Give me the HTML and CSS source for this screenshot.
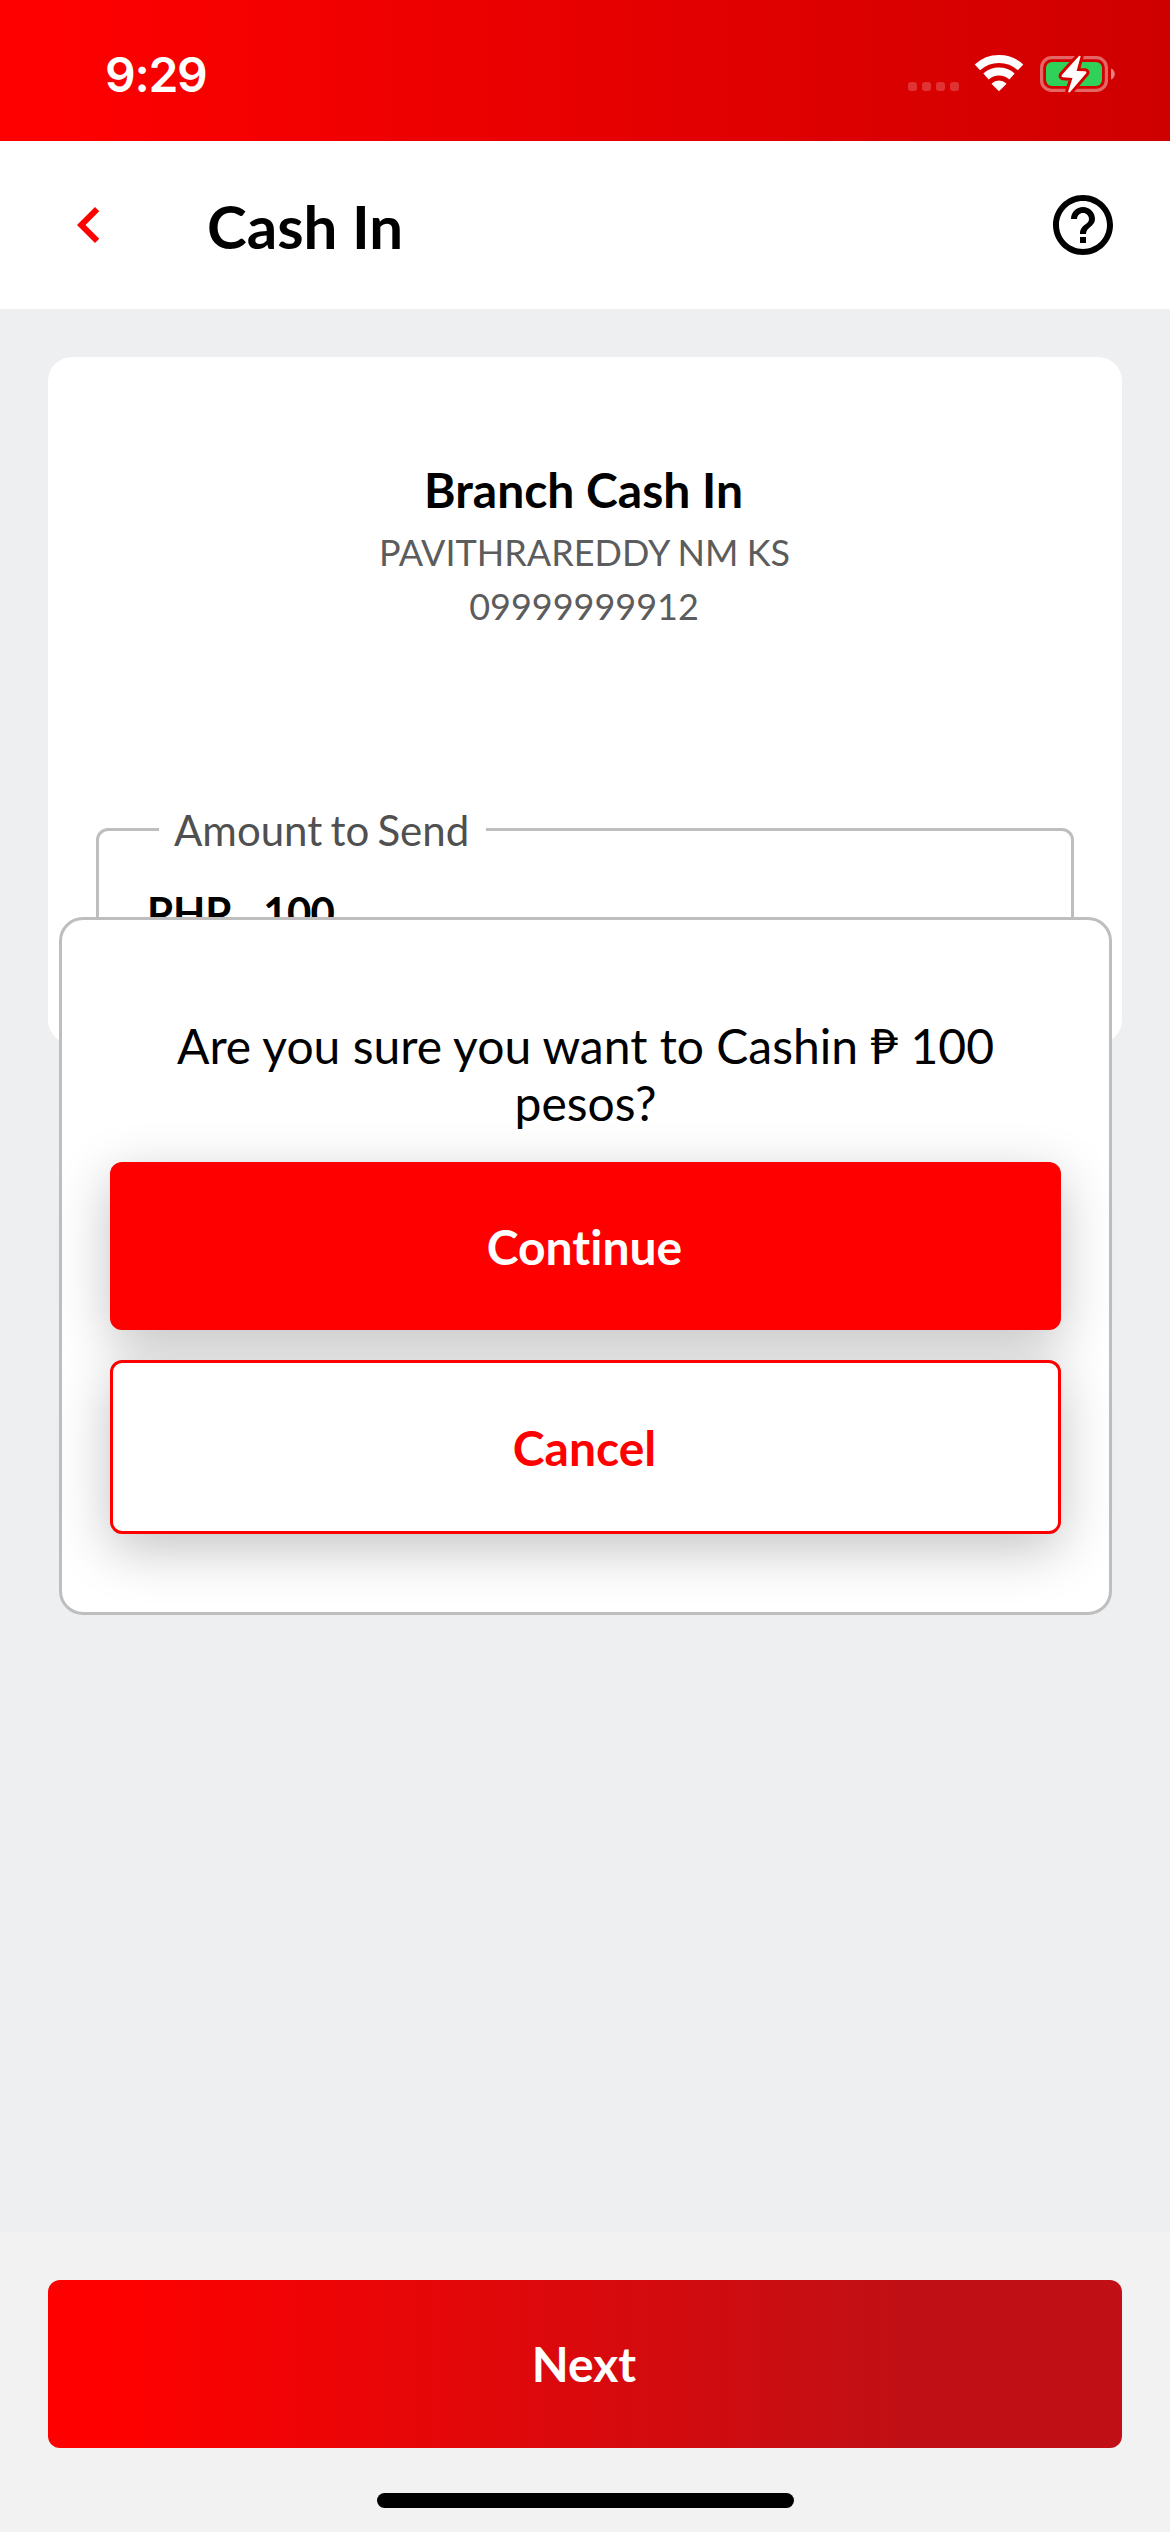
FILE: index.html
```html
<!DOCTYPE html>
<html lang="en">
<head>
<meta charset="utf-8">
<title>Cash In</title>
<link rel="stylesheet" href="styles.css">
</head>
<body>
<div class="screen">
  <div class="status-bar">
    <span class="time">9:29</span>
    <div class="indicators">
      <div class="signal"><i></i><i></i><i></i><i></i></div>
      <svg class="wifi" viewBox="-25 -37 50 38" aria-hidden="true">
        <path d="M-21.6-23.6A32 32 0 0 1 21.6-23.6M-13-14.5A19.5 19.5 0 0 1 13-14.5" fill="none" stroke="#fff" stroke-width="8"/>
        <path d="M-6.6-7.2A10 10 0 0 1 6.6-7.2L0-.8Z" fill="#fff" stroke="#fff" stroke-width="1.4" stroke-linejoin="round"/>
      </svg>
      <svg class="battery" viewBox="0 0 76 40" aria-hidden="true">
        <rect x="1.6" y="3.6" width="64.8" height="32.800" rx="10" fill="none" stroke="#fff" stroke-opacity=".4" stroke-width="3.200"/>
        <path d="M71 14.5c5 1.500 5 9.500 0 11Z" fill="#fff" fill-opacity=".5"/>
        <rect x="6" y="8" width="56" height="24" rx="6" fill="#30d158"/>
        <path d="M38.500 2.500 22 20.700Q20.800 22.900 23 23.300L32.500 24 28.200 37.500Q28.600 39.300 30.300 37.700L46 19.500Q47.300 17.500 45 17.300L36.600 17 40.600 2.500Q40 .900 38.500 2.500Z" fill="#fff" stroke="#d60000" stroke-width="6" stroke-linejoin="round" paint-order="stroke"/>
      </svg>
    </div>
  </div>

  <header class="header">
    <svg class="back" viewBox="0 0 24 24" aria-label="Back"><path fill="#f00" d="M15.410 7.410 14 6l-6 6 6 6 1.410-1.410L10.830 12z"/></svg>
    <h1 class="title">Cash In</h1>
    <svg class="help" viewBox="0 0 24 24" aria-label="Help"><path d="M11 18h2v-2h-2v2zm1-16C6.480 2 2 6.480 2 12s4.480 10 10 10 10-4.480 10-10S17.520 2 12 2zm0 18c-4.410 0-8-3.590-8-8s3.590-8 8-8 8 3.590 8 8-3.590 8-8 8zm0-14c-2.210 0-4 1.790-4 4h2c0-1.100.9-2 2-2s2 .9 2 2c0 2-3 1.750-3 5h2c0-2.250 3-2.500 3-5 0-2.210-1.790-4-4-4z"/></svg>
  </header>

  <main class="content">
    <section class="card">
      <h2 class="card-title">Branch Cash In</h2>
      <p class="detail name">PAVITHRAREDDY NM KS</p>
      <p class="detail phone">09999999912</p>
      <fieldset class="field">
        <legend class="label">Amount to Send</legend>
        <div class="amount"><span class="currency">PHP</span><span class="value">100</span></div>
      </fieldset>
    </section>
  </main>

  <footer class="footer">
    <button class="button next">Next</button>
    <div class="home-indicator"></div>
  </footer>

  <div class="modal" role="dialog">
    <p class="question">Are you sure you want to Cashin ₱ 100<br>pesos?</p>
    <button class="button continue">Continue</button>
    <button class="button cancel">Cancel</button>
  </div>
</div>
</body>
</html>
```
FILE: styles.css
```css
* {
  box-sizing: border-box;
  margin: 0;
  padding: 0;
}

body {
  font-family: Lato, "Noto Sans", sans-serif;
  font-variant-ligatures: none;
  color: #000;
}

.screen {
  position: relative;
  display: flex;
  flex-direction: column;
  width: 1170px;
  height: 2532px;
  overflow: hidden;
  background: #eeeff1;
}

.status-bar {
  display: flex;
  align-items: center;
  justify-content: space-between;
  flex: none;
  height: 141px;
  padding: 8px 54px 0 105px;
  background: linear-gradient(90deg, #f00 2%, #cf0000 100%);
}

.time {
  font: 600 48px/58px Inter, sans-serif;
  letter-spacing: -1.3px;
  color: #fff;
}

.indicators {
  display: flex;
  align-items: center;
}

.signal {
  display: flex;
  gap: 5px;
  margin: 24px 58px 0 0;
}

.signal i {
  width: 9px;
  height: 9px;
  border-radius: 3px;
  background: rgba(255, 255, 255, .2);
}

.signal {
  margin-right: 15px;
}

.wifi {
  width: 50px;
  height: 38px;
  margin: -4px 16px 0 0;
}

.battery {
  width: 76px;
  height: 40px;
  margin-top: -1px;
}

.header {
  display: flex;
  align-items: center;
  flex: none;
  height: 168px;
  padding: 0 51px 0 53px;
  background: #fff;
}

.back,
.help {
  width: 72px;
  height: 72px;
}

.title {
  flex: 1;
  margin-left: 82px;
  padding-top: 2px;
  font-size: 60px;
  line-height: 72px;
}

.content {
  flex: 1;
  padding: 48px;
}

.card {
  height: 687px;
  padding: 104px 48px 48px;
  border-radius: 24px;
  background: #fff;
  text-align: center;
}

.card-title {
  margin-bottom: 6px;
  padding-right: 3px;
  font-size: 48px;
  line-height: 58px;
}

.detail {
  font-size: 36px;
  line-height: 54px;
  color: #5c5c5c;
}

.name {
  padding-right: 1px;
  word-spacing: -.8px;
}

.phone {
  padding-right: 2px;
}

.field {
  height: 193px;
  margin-top: 170px;
  border: 3px solid #bebebe;
  border-radius: 12px;
  text-align: left;
}

.label {
  width: 327px;
  margin-left: 60px;
  padding: 2px 0 0 15px;
  font-size: 42px;
  line-height: 50px;
  word-spacing: -2.6px;
  color: #505050;
}

.amount {
  display: flex;
  gap: 32px;
  padding: 32px 48px;
  font-size: 42px;
  font-weight: 700;
  line-height: 50px;
}

.value {
  letter-spacing: -.8px;
}

.modal {
  position: absolute;
  top: 917px;
  left: 59px;
  display: flex;
  flex-direction: column;
  width: 1053px;
  height: 698px;
  padding: 97px 48px 0;
  border: 3px solid #bebebe;
  border-radius: 24px;
  background: #fff;
}

.question {
  margin-bottom: 31px;
  font-size: 48px;
  line-height: 57px;
  text-align: center;
  white-space: nowrap;
}

.button {
  display: flex;
  align-items: center;
  justify-content: center;
  flex: none;
  height: 168px;
  padding-right: 2px;
  border: 0;
  border-radius: 12px;
  font: 700 48px/58px Lato, sans-serif;
  font-variant-ligatures: none;
  color: #fff;
}

.continue {
  margin-bottom: 30px;
  padding-top: 2px;
  background: #f00;
  box-shadow: 0 15px 54px rgba(0, 0, 0, .24);
}

.cancel {
  height: 174px;
  padding-top: 2px;
  border: 3px solid #f00;
  background: #fff;
  box-shadow: 0 15px 54px rgba(0, 0, 0, .24);
  color: #f00;
}

.footer {
  display: flex;
  flex-direction: column;
  flex: none;
  height: 300px;
  padding: 48px 48px 0;
  background: #f2f2f2;
}

.next {
  background: linear-gradient(90deg, #f00 5%, #c01015 80%);
}

.home-indicator {
  align-self: center;
  width: 417px;
  height: 15px;
  margin-top: 45px;
  border-radius: 8px;
  background: #000;
}
```
